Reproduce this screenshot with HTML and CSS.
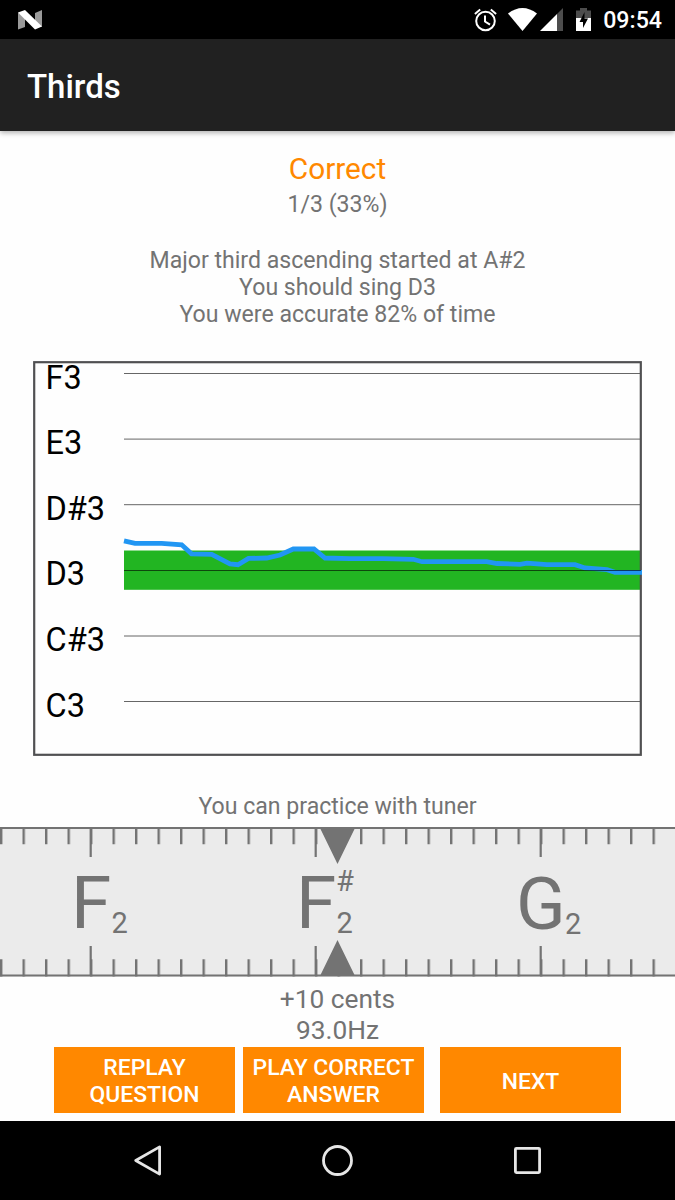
FILE: index.html
```html
<!DOCTYPE html>
<html lang="en">

<head>
    <meta charset="UTF-8">
    <meta name="viewport" content="width=device-width, initial-scale=1.0">
    <title>Thirds</title>
    <link rel="stylesheet" href="styles.css">
</head>

<body>
    <div class="status-bar">
        <svg class="logo" width="26" height="22" viewBox="0 0 26 22">
            <path fill="#9a9a9a" d="M1 3.5V20.5L8 18V7z M18 4L25 1V18L18 13z" />
            <path fill="#fff" d="M1 3.5L8 1L25 17.5L18 20.5z" />
        </svg>
        <div class="status-icons">
            <svg width="188" height="28" viewBox="0 0 188 28">
                <g fill="none" stroke="#fff" stroke-width="2">
                    <circle cx="15.5" cy="15" r="9.3" />
                    <path d="M15 9.5V15.5L20 18.7M4.9 8L10.2 3.6M20.8 3.6L26.1 8" />
                </g>
                <path fill="#fff" d="M38 7.5Q52.5 -3.5 67 7.5L52.5 25z" />
                <path fill="#fff" d="M70 25L87 8V25z" />
                <path fill="#4d4d4d" d="M87 8L93 2V25H87z" />
                <path fill="#4d4d4d" d="M106 12V4.5H110V2H117V4.5H121V12z" />
                <path fill="#fff" d="M106 12H121V25H106z" />
                <path fill="#000" d="M114.5 6L109.5 16H113V22L118 12.5H114.5z" />
            </svg>
            <span class="clock">09:54</span>
        </div>
    </div>

    <header class="app-bar">Thirds</header>

    <main>
        <div class="result">Correct</div>
        <div class="score">1/3 (33%)</div>
        <p class="details">
            Major third ascending started at A#2<br>
            You should sing D3<br>
            You were accurate 82% of time
        </p>

        <svg class="chart" width="609" height="395" viewBox="33 361 609 395">
            <rect class="target" x="124" y="550.5" width="517" height="39.3" />
            <path class="grid" d="M124 373.5H641M124 439.1H641M124 504.7H641M124 636H641M124 701.5H641" />
            <rect class="frame" x="34.2" y="362.2" width="606.6" height="392.6" />
            <polyline class="pitch" points="124,540.8 135,543.4 161.7,543.4 181.7,544.8 191.5,553.8 211.7,554.4 230,563.8 238,564.7 248.5,558.4 266.7,558 280,555 293.3,549 314,549 325,558 350,558.6 383,558.6 413.3,559.3 422,561.7 486.7,561.7 497,563.5 520,564.3 527,563.2 547,564.7 575,564.7 585,568 607,569.7 615,572.3 642,572.3" />
            <path class="grid" d="M124 570.5H641" />
            <g class="notes">
                <text x="45.5" y="388.5">F3</text>
                <text x="45.5" y="454.2">E3</text>
                <text x="45.5" y="519.8">D#3</text>
                <text x="45.5" y="585.4">D3</text>
                <text x="45.5" y="651">C#3</text>
                <text x="45.5" y="716.6">C3</text>
            </g>
        </svg>

        <div class="hint">You can practice with tuner</div>

        <svg class="tuner" width="675" height="150" viewBox="0 827 675 150">
            <defs>
                <pattern id="ticks" x="0" y="827" width="22.5" height="150" patternUnits="userSpaceOnUse">
                    <path d="M1.2 0V17.3M1.2 132.3V150" stroke="#737373" stroke-width="2.4" />
                </pattern>
            </defs>
            <rect width="675" height="149.5" y="827" fill="#ebebeb" />
            <rect width="675" height="149.5" y="827" fill="url(#ticks)" />
            <path class="ruler" d="M0 828H675M0 975.5H675M90.7 828V857M315.7 828V857M540.7 828V857M90.7 946V975M315.7 946V975M540.7 946V975" />
            <path fill="#737373" d="M320 828H355L337.5 864zM320 976H355L337.5 940z" />
            <text class="note" x="71" y="928">F</text>
            <text class="mark" x="111.5" y="933">2</text>
            <text class="note" x="296" y="928">F</text>
            <text class="mark" x="336" y="891">#</text>
            <text class="mark" x="336.5" y="933">2</text>
            <text class="note" x="516" y="929">G</text>
            <text class="mark" x="565" y="934.3">2</text>
        </svg>

        <div class="reading">+10 cents<br>93.0Hz</div>

        <div class="buttons">
            <button type="button">REPLAY QUESTION</button>
            <button type="button">PLAY CORRECT ANSWER</button>
            <button type="button" class="next">NEXT</button>
        </div>
    </main>

    <nav class="nav-bar">
        <svg width="31" height="31" viewBox="0 0 31 31">
            <path d="M27.6 1.9V29.1L3.7 15.5z" />
        </svg>
        <svg width="31" height="31" viewBox="0 0 31 31">
            <circle cx="15.5" cy="15.5" r="14" />
        </svg>
        <svg width="31" height="31" viewBox="0 0 31 31">
            <rect x="3.4" y="3.4" width="24.2" height="24.2" rx="1" />
        </svg>
    </nav>
</body>

</html>
```
FILE: styles.css
```css
body {
    font-family: Roboto, "Liberation Sans", sans-serif;
    background-color: #fefefe;
    color: #737373;
    margin: 0;
    height: 1200px;
    display: flex;
    flex-direction: column;
    text-align: center;
    overflow: hidden;
}

svg {
    display: block;
    overflow: visible;
}

.status-bar {
    height: 39px;
    box-sizing: border-box;
    padding: 0 13px 0 17px;
    background-color: #000;
    display: flex;
    align-items: center;
    justify-content: space-between;
}

.status-icons {
    display: flex;
    align-items: center;
    height: 40px;
}

.status-icons svg {
    width: 188px;
    margin-right: -55px;
}

.clock {
    color: #fff;
    font-size: 23.2px;
    font-weight: 500;
    line-height: 27px;
    padding-top: 2px;
}

.app-bar {
    height: 92px;
    line-height: 96px;
    box-sizing: border-box;
    padding-left: 27px;
    background-color: #212121;
    color: #fff;
    font-size: 33px;
    font-weight: 500;
    text-align: left;
    box-shadow: 0 2px 5px rgba(0, 0, 0, 0.3);
}

main {
    flex: 1;
    display: flex;
    flex-direction: column;
    align-items: center;
    font-size: 23.1px;
    line-height: 27px;
}

.result {
    margin-top: 20px;
    color: #ff8800;
    font-size: 29.8px;
    line-height: 35px;
}

.score {
    margin-top: 5px;
}

.details {
    margin: 29px 0 33px;
}

.target {
    fill: #22b522;
}

.grid {
    stroke: rgba(0, 0, 0, 0.6);
}

.frame {
    fill: none;
    stroke: #505052;
    stroke-width: 2.2px;
}

.pitch {
    fill: none;
    stroke: #2196f3;
    stroke-width: 4.8px;
}

.notes {
    fill: #000;
    font-size: 32.5px;
}

.hint {
    margin: 37px 0 7px;
}

.ruler {
    fill: none;
    stroke: #737373;
    stroke-width: 2.2px;
}

.note {
    fill: #737373;
    font-size: 73px;
}

.mark {
    fill: #737373;
    font-size: 29px;
}

.reading {
    margin-top: 7px;
    font-size: 26.3px;
    line-height: 31px;
}

.buttons {
    display: flex;
    gap: 8px;
    margin-top: 1px;
}

.buttons button {
    width: 181px;
    height: 66px;
    padding: 2px 0 0;
    border: none;
    background-color: #ff8800;
    color: #fff;
    font-family: inherit;
    font-size: 22.9px;
    font-weight: 500;
    line-height: 27px;
}

.buttons .next {
    margin-left: 8px;
}

.nav-bar {
    height: 79px;
    background-color: #000;
    display: flex;
    justify-content: center;
    align-items: center;
    gap: 159px;
}

.nav-bar svg {
    fill: none;
    stroke: #e6e6e6;
    stroke-width: 2.8px;
    stroke-linejoin: round;
}
```
